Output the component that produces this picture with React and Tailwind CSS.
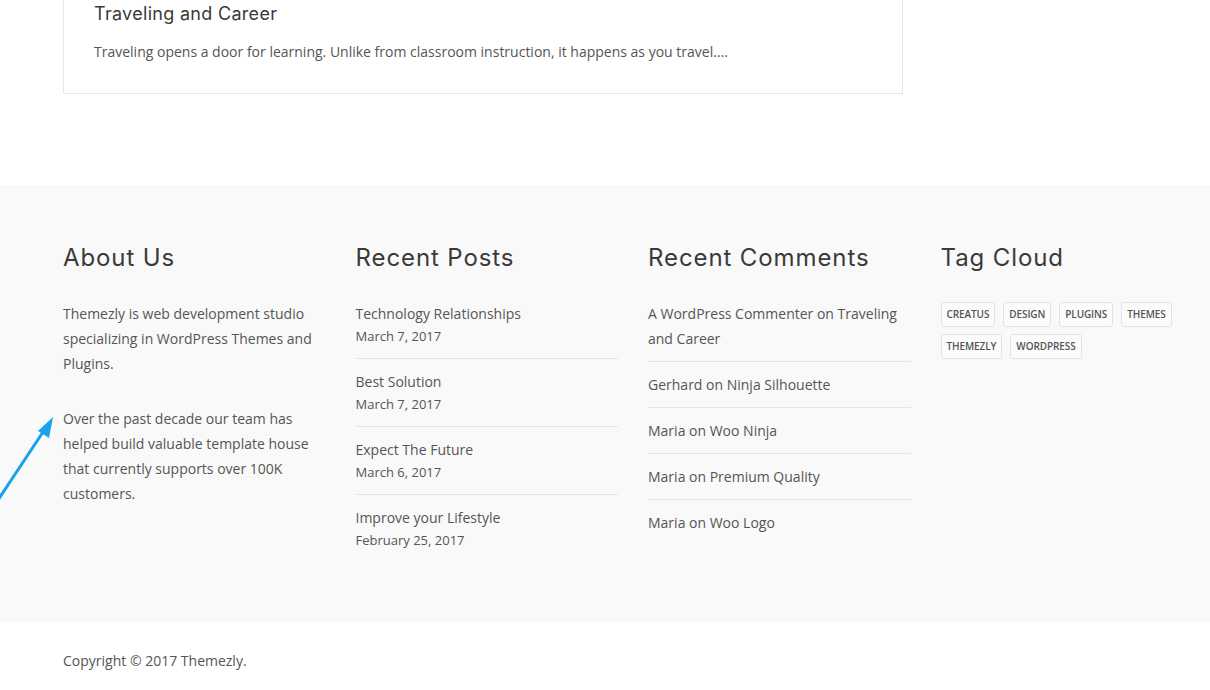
import React from "react";

const body = { fontFamily: '"Open Sans", "Noto Sans", sans-serif' };
const head = { fontFamily: '"Inter", "DejaVu Sans", sans-serif' };

const posts = [
  ["Technology Relationships", "March 7, 2017"],
  ["Best Solution", "March 7, 2017"],
  ["Expect The Future", "March 6, 2017"],
  ["Improve your Lifestyle", "February 25, 2017"],
];

const comments = [
  "A WordPress Commenter on Traveling and Career",
  "Gerhard on Ninja Silhouette",
  "Maria on Woo Ninja",
  "Maria on Premium Quality",
  "Maria on Woo Logo",
];

const tags = ["CREATUS", "DESIGN", "PLUGINS", "THEMES", "THEMEZLY", "WORDPRESS"];

function Heading({ children }) {
  return (
    <h3
      style={head}
      className="text-[24px] leading-[30px] text-[#3a3a3a] font-normal tracking-[0.9px] mb-[28px]"
    >
      {children}
    </h3>
  );
}

export default function App() {
  return (
    <div className="relative w-[1210px] h-[690px] overflow-hidden bg-white" style={body}>
      {/* Top card */}
      <div className="pl-[63px] h-[185px]">
        <div className="w-[840px] border-x border-b border-[#e6e6e6] px-[30px] pt-[1px] pb-[29px]">
          <h2 style={head} className="text-[18px] leading-[26px] text-[#3a3a3a] font-normal tracking-[0.3px] mb-[12px]">
            Traveling and Career
          </h2>
          <p className="text-[14px] leading-[25px] text-[#555]">
            Traveling opens a door for learning. Unlike from classroom instruction, it happens as you travel.…
          </p>
        </div>
      </div>

      {/* Footer widgets */}
      <div className="bg-[#f9f9f9] h-[437px] pt-[58px] pl-[48px] flex">
        <div className="w-[292.5px] shrink-0 px-[15px]">
          <Heading>About Us</Heading>
          <p className="text-[14px] leading-[25px] text-[#555] mb-[30px]">
            Themezly is web development studio specializing in WordPress Themes and Plugins.
          </p>
          <p className="text-[14px] leading-[25px] text-[#555]">
            Over the past decade our team has helped build valuable template house that currently supports over 100K customers.
          </p>
        </div>
        <div className="w-[292.5px] shrink-0 px-[15px]">
          <Heading>Recent Posts</Heading>
          <ul className="pt-[1px]">
            {posts.map(([t, d], i) => (
              <li
                key={t}
                className={
                  (i === 0 ? "" : "pt-[11px] ") +
                  (i === posts.length - 1 ? "" : "pb-[11px] border-b border-[#e6e6e6]")
                }
              >
                <div className="text-[14px] leading-[23px] text-[#555]">{t}</div>
                <div className="text-[13px] leading-[22px] text-[#555]">{d}</div>
              </li>
            ))}
          </ul>
        </div>
        <div className="w-[292.5px] shrink-0 px-[15px]">
          <Heading>Recent Comments</Heading>
          <ul>
            {comments.map((c, i) => (
              <li
                key={c}
                className={
                  "text-[14px] leading-[25px] text-[#555] " +
                  (i === 0 ? "" : "pt-[10px] ") +
                  (i === comments.length - 1 ? "" : "pb-[10px] border-b border-[#e6e6e6]")
                }
              >
                {c}
              </li>
            ))}
          </ul>
        </div>
        <div className="w-[292.5px] shrink-0 px-[15px]">
          <Heading>Tag Cloud</Heading>
          <div className="flex flex-wrap gap-x-[8px] gap-y-[7px] pt-[1px]">
            {tags.map((t) => (
              <span
                key={t}
                className="h-[25px] px-[5px] flex items-center border border-[#e3e3e3] rounded-[3px] bg-[#fbfbfb] text-[10px] font-semibold text-[#555] tracking-[-0.1px]"
              >
                {t}
              </span>
            ))}
          </div>
        </div>
      </div>

      {/* Copyright */}
      <div className="pl-[63px] pt-[26px]">
        <p className="text-[14px] leading-[25px] text-[#555]">Copyright © 2017 Themezly.</p>
      </div>

      {/* annotation arrow */}
      <svg
        className="absolute left-0 top-[410px] pointer-events-none"
        width="60"
        height="95"
        viewBox="0 0 60 95"
      >
        <line x1="-2" y1="90" x2="45" y2="19" stroke="#1aa3ea" strokeWidth="3" strokeLinecap="round" />
        <polygon points="53,7 49,28 38,21" fill="#1aa3ea" />
      </svg>
    </div>
  );
}
